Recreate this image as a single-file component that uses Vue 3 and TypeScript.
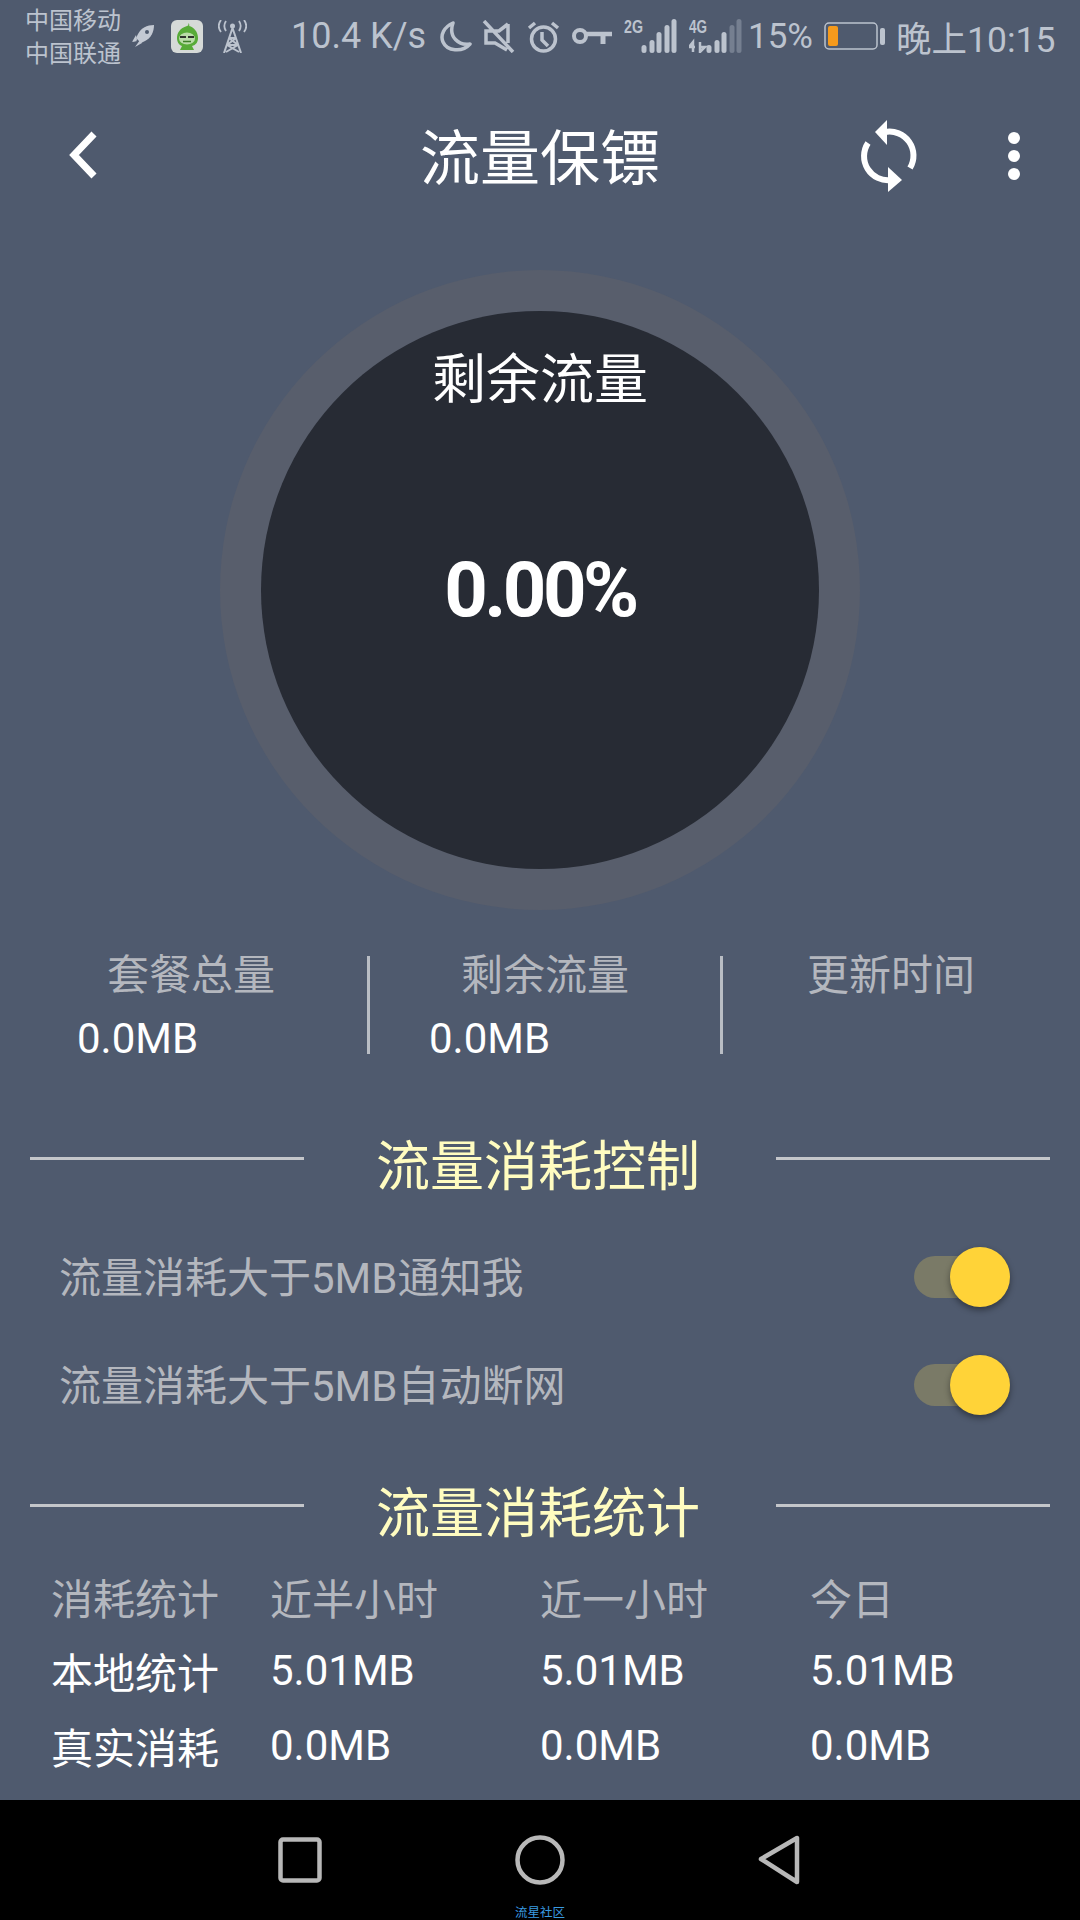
<script setup lang="ts">
const stats = [
  { label: '套餐总量', value: '0.0MB' },
  { label: '剩余流量', value: '0.0MB' },
  { label: '更新时间', value: '' },
]
const controls = ['流量消耗大于5MB通知我', '流量消耗大于5MB自动断网']
const table = [
  { cls: 'dim', cells: ['消耗统计', '近半小时', '近一小时', '今日'] },
  { cls: 'bright', cells: ['本地统计', '5.01MB', '5.01MB', '5.01MB'] },
  { cls: 'bright', cells: ['真实消耗', '0.0MB', '0.0MB', '0.0MB'] },
]
const sigBars = [
  { x: 17.500, h: 8 },
  { x: 25.500, h: 13 },
  { x: 32.500, h: 21 },
  { x: 40.500, h: 28 },
  { x: 47.500, h: 34 },
]
</script>

<template>
  <div class="screen">
    <main class="main">
      <div class="status">
        <div class="carriers"><span>中国移动</span><span>中国联通</span></div>
        <svg class="i-rocket" width="22" height="23" viewBox="0 0 22 23">
          <path d="M22 0C15 0 9 3 6 9l-2 4 5 5 4-2c6-3 9-9 9-16z" fill="#c3c9d3" />
          <circle cx="15" cy="7" r="2" fill="#4f5a6e" />
          <path d="M4 10L0 17l5-2zM8 15l-5 7 7-4zM3 14l-2 3 4-1z" fill="#c3c9d3" />
        </svg>
        <svg class="i-app" width="32" height="33" viewBox="0 0 32 33">
          <rect width="32" height="33" rx="6" fill="#d6dad8" />
          <path d="M17 3c1 2 0 3-1 3C9 8 6 13 6 18c0 4 2 7 5 8l-2 4h14l-2-4c4-1 6-4 6-8 0-6-4-11-9-12 1-1 0-2-1-3z" fill="#57ab38" />
          <ellipse cx="16" cy="18.500" rx="8" ry="6" fill="#b9dca8" />
          <path d="M9 17h6M17 17h6" stroke="#30352e" stroke-width="2" />
          <path d="M12 21.500h8" stroke="#3e7f28" stroke-width="1.500" />
        </svg>
        <svg class="i-tower" width="29" height="33" viewBox="0 0 29 33" fill="none" stroke="#bcc3ce" stroke-width="2.500">
          <path d="M14.500 8L6 33M14.500 8L23 33M9 25h11M11 18h7M9 25l12 7M20 25L8 32M11 18l9 7M18 18l-9 7" stroke-width="2" />
          <circle cx="14.500" cy="6" r="2.500" fill="#bcc3ce" stroke="none" />
          <path d="M8 1C6 4 6 8 8 11M21 1c2 3 2 7 0 10M3 0C0 4 0 8 3 12M26 0c3 4 3 8 0 12" stroke-width="1.800" />
        </svg>
        <span class="speed">10.4 K/s</span>
        <svg class="i-moon" width="34" height="33" viewBox="0 0 34 33" fill="none" stroke="#bcc3ce" stroke-width="3.500" stroke-linejoin="round">
          <path d="M14 3C5 7 1 15 4 22c4 9 19 11 27 2C20 26 9 17 14 3z" />
        </svg>
        <svg class="i-mute" width="33" height="33" viewBox="0 0 33 33" fill="none" stroke="#bcc3ce" stroke-width="3.500">
          <path d="M2 1l29 31M26 4l-9 7H4v12h9l12 7M26 4v19" />
        </svg>
        <svg class="i-alarm" width="33" height="33" viewBox="0 0 33 33" fill="none" stroke="#bcc3ce" stroke-width="3.500">
          <circle cx="16.500" cy="19" r="12" />
          <path d="M15 12v8l6 6" />
          <path d="M2 8l6-5M31 8l-6-5" stroke-width="3.500" />
        </svg>
        <svg class="i-key" width="40" height="16" viewBox="0 0 40 16" fill="none" stroke="#bcc3ce">
          <circle cx="8" cy="8" r="6" stroke-width="4" />
          <path d="M14 6h26" stroke-width="4.500" />
          <path d="M31 6v10" stroke-width="5" />
        </svg>
        <svg class="i-sig" width="53" height="40" viewBox="0 -6 53 40">
          <text x="0" y="14" class="net" textLength="19" lengthAdjust="spacingAndGlyphs">2G</text>
          <rect v-for="b in sigBars" :key="b.x" :x="b.x" :y="34 - b.h" width="5" :height="b.h" rx="2.500" fill="#bcc3ce" />
        </svg>
        <svg class="i-sig" width="53" height="40" viewBox="0 -6 53 40">
          <text x="0" y="14" class="net" textLength="18" lengthAdjust="spacingAndGlyphs">4G</text>
          <path d="M4 33V23L0 28h6M11 23v10l5-5h-5" stroke="#bcc3ce" stroke-width="2.500" fill="none" />
          <rect v-for="(b, i) in sigBars" :key="b.x" :x="b.x" :y="34 - b.h" width="5" :height="b.h" rx="2.500" :fill="i > 2 ? '#757f90' : '#bcc3ce'" />
        </svg>
        <span class="percent">15%</span>
        <svg class="i-battery" width="61" height="28" viewBox="0 0 61 28">
          <rect x="1" y="1" width="52" height="26" rx="4" fill="none" stroke="#bcc3ce" stroke-width="1.500" />
          <rect x="4" y="4" width="10" height="20" rx="2" fill="#f59a1c" />
          <rect x="56" y="6" width="5" height="17" rx="2" fill="#bcc3ce" />
        </svg>
        <span class="clock">晚上10:15</span>
      </div>

      <header class="header">
        <svg class="back" width="32" height="48" viewBox="0 0 32 48" fill="none" stroke="#fff" stroke-width="7">
          <path d="M27 3L7 24l20 21" />
        </svg>
        <h1 class="title">流量保镖</h1>
        <div class="actions">
          <svg width="58" height="76" viewBox="0 0 58 76" fill="none" stroke="#fff" stroke-width="6">
            <path d="M25 14A24 24 0 0 1 50 50" />
            <path d="M31 62A24 24 0 0 1 8 25" />
            <path d="M15 14L27 2v25z" fill="#fff" stroke="none" />
            <path d="M42 62L28 49v25z" fill="#fff" stroke="none" />
          </svg>
          <div class="dots"><i></i><i></i><i></i></div>
        </div>
      </header>

      <section class="ring">
        <div class="disc">
          <div class="disc-label">剩余流量</div>
          <div class="disc-value">0.00%</div>
        </div>
      </section>

      <section class="stats">
        <div v-for="s in stats" :key="s.label" class="stat">
          <div class="stat-label">{{ s.label }}</div>
          <div class="stat-value">{{ s.value }}</div>
        </div>
      </section>

      <div class="section first">
        <span class="rule"></span>
        <h2>流量消耗控制</h2>
        <span class="rule"></span>
      </div>

      <div class="controls">
        <div v-for="c in controls" :key="c" class="control">
          <span>{{ c }}</span>
          <div class="switch"><i class="thumb"></i></div>
        </div>
      </div>

      <div class="section second">
        <span class="rule"></span>
        <h2>流量消耗统计</h2>
        <span class="rule"></span>
      </div>

      <div class="table">
        <template v-for="r in table" :key="r.cells[0]">
          <div v-for="(c, i) in r.cells" :key="i" class="cell" :class="r.cls">{{ c }}</div>
        </template>
      </div>
    </main>

    <nav class="nav">
      <div class="nav-icons">
        <svg width="44" height="46" viewBox="0 0 44 46" fill="none" stroke="#b8b8b8" stroke-width="4.500">
          <rect x="2.500" y="2.500" width="39" height="41" rx="2.500" />
        </svg>
        <svg width="50" height="50" viewBox="0 0 50 50" fill="none" stroke="#b8b8b8" stroke-width="4.500">
          <circle cx="25" cy="25" r="22.500" />
        </svg>
        <svg width="42" height="50" viewBox="0 0 42 50" fill="none" stroke="#b8b8b8" stroke-width="4.500" stroke-linejoin="round">
          <path d="M39 3v44L3 24z" />
        </svg>
      </div>
      <div class="watermark">流星社区</div>
    </nav>
  </div>
</template>

<style>
html, body { margin: 0; background: #000; }
</style>

<style scoped>
.screen {
  width: 1080px;
  height: 1920px;
  display: flex;
  flex-direction: column;
  font-family: Roboto, "Noto Sans CJK SC", sans-serif;
  overflow: hidden;
}
.main { flex: 1; background: #4f5a6e; min-height: 0; }
.status {
  height: 70px;
  display: flex;
  align-items: center;
  padding: 2px 0 0 25px;
  color: #bcc3ce;
  box-sizing: border-box;
}
.status > * { flex: none; }
.carriers { display: flex; flex-direction: column; width: 107px; font-size: 24px; line-height: 33px; padding-top: 4px; }
.i-rocket { margin-right: 17px; }
.i-app { margin-right: 15px; }
.i-tower { margin-right: 44px; }
.speed { font-size: 36px; width: 148px; white-space: nowrap; }
.i-moon { margin-right: 9px; }
.i-mute { margin-right: 12px; }
.i-alarm { margin-right: 12px; }
.i-key { margin-right: 12px; }
.i-sig { margin-right: 12px; margin-top: -6px; }
.net { font: 700 19px "Liberation Sans Narrow", "Liberation Sans", sans-serif; fill: #bcc3ce; }
.percent { font-size: 35px; width: 76px; margin-left: -6px; }
.i-battery { margin-right: 11px; }
.clock { font-size: 35.500px; white-space: nowrap; }

.header {
  height: 174px;
  display: grid;
  grid-template-columns: 1fr auto 1fr;
  align-items: center;
  padding: 0 60px;
}
.back { justify-self: start; margin: -4px 0 0 7px; }
.title { margin: 5px 0 0; color: #fff; font-size: 60px; font-weight: 400; line-height: 1; }
.actions { justify-self: end; display: flex; align-items: center; gap: 90px; margin-top: -2px; }
.dots { display: flex; flex-direction: column; gap: 6px; }
.dots i { width: 12px; height: 12px; border-radius: 50%; background: #fff; }

.ring {
  width: 640px;
  height: 640px;
  margin: 26px auto 0;
  border-radius: 50%;
  background: #585e6c;
  display: flex;
  align-items: center;
  justify-content: center;
}
.disc {
  width: 558px;
  height: 558px;
  border-radius: 50%;
  background: #272b34;
  color: #fff;
  display: flex;
  flex-direction: column;
  align-items: center;
  box-sizing: border-box;
  padding-top: 38px;
}
.disc-label { font-size: 54px; line-height: 64px; }
.disc-value { font-size: 76px; font-weight: 700; letter-spacing: -3.500px; line-height: 90px; margin-top: 132px; }

.stats {
  display: grid;
  grid-template-columns: 340px 353px 1fr;
  margin: 46px 0 0 30px;
  height: 97px;
}
.stat { position: relative; }
.stat:nth-child(1)::after, .stat:nth-child(2)::after {
  content: "";
  position: absolute;
  right: 0;
  top: 0;
  bottom: 0;
  width: 3px;
  background: #b9bdc4;
}
.stat-label { font-size: 42px; line-height: 40px; color: #b4b7be; }
.stat-value { font-size: 42px; line-height: 30px; color: #fff; margin-top: 28px; }
.stat:nth-child(1) { padding-left: 47px; }
.stat:nth-child(1) .stat-label { padding-left: 30px; }
.stat:nth-child(2) { padding-left: 59px; }
.stat:nth-child(2) .stat-label { padding-left: 32px; }
.stat:nth-child(3) { padding-left: 84px; }

.section {
  height: 70px;
  display: flex;
  align-items: center;
  justify-content: space-between;
  padding: 0 30px;
}
.section.first { margin-top: 80px; }
.section.second { margin-top: 44px; }
.section h2 { margin: 0 4px 0 0; font-size: 54px; font-weight: 400; color: #fffcc0; line-height: 70px; }
.rule { width: 274px; height: 3px; background: #c4c6ca; margin-bottom: 20px; }

.controls { margin-top: 17px; }
.control {
  height: 108px;
  display: flex;
  align-items: center;
  justify-content: space-between;
  padding: 0 70px 0 59px;
  font-size: 42px;
  color: #b4b7be;
}
.switch {
  position: relative;
  width: 84px;
  height: 42px;
  border-radius: 21px;
  background: #7a7a67;
  margin: 6px 12px 0 0;
}
.thumb {
  position: absolute;
  right: -12px;
  top: -9px;
  width: 60px;
  height: 60px;
  border-radius: 50%;
  background: #ffd338;
  box-shadow: 0 3px 6px rgba(0, 0, 0, 0.4);
}

.table {
  display: grid;
  grid-template-columns: 219px 270px 270px 1fr;
  grid-template-rows: 72px 76px 75px;
  margin-top: 10px;
  padding-left: 51px;
  font-size: 42px;
  align-items: center;
}
.cell { white-space: nowrap; }
.cell.dim { color: #b4b7be; }
.cell.bright { color: #fff; }

.nav {
  height: 120px;
  background: #000;
  position: relative;
  flex: none;
}
.nav-icons {
  display: grid;
  grid-template-columns: 44px 50px 42px;
  justify-content: center;
  column-gap: 193px;
  align-items: center;
  padding: 35px 2px 0 0;
}
.watermark {
  position: absolute;
  left: 0;
  right: 0;
  bottom: 0;
  text-align: center;
  font-size: 12.500px;
  line-height: 15px;
  color: #3a9be0;
}
</style>
